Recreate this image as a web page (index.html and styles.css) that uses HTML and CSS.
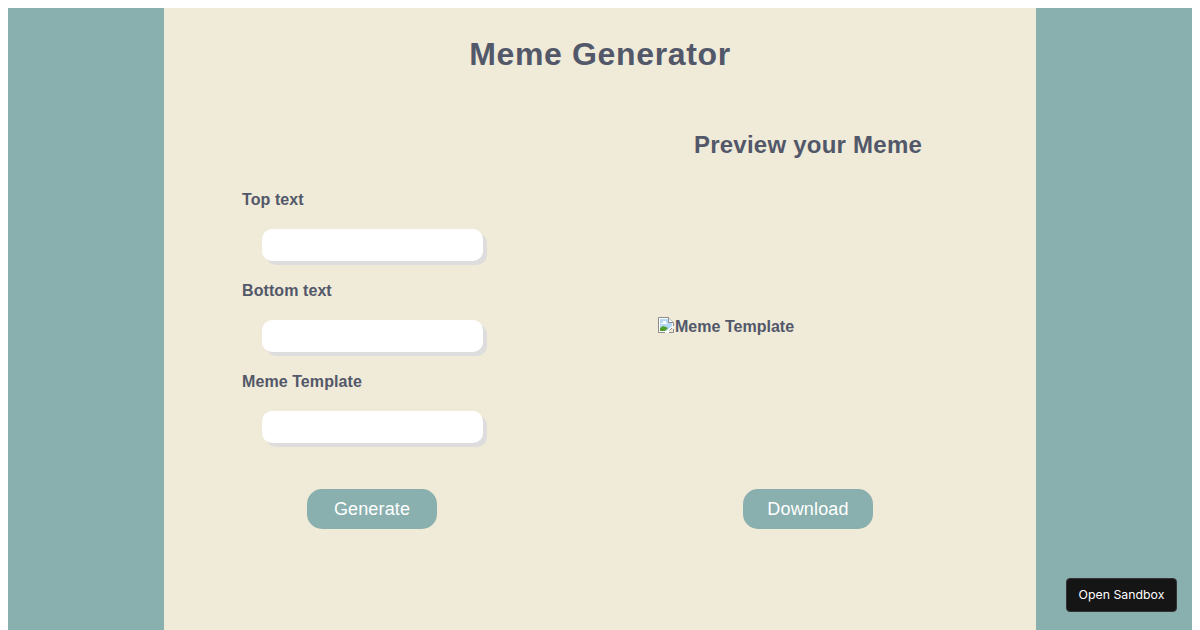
FILE: index.html
```html
<!DOCTYPE html>
<html lang="en">
<head>
<meta charset="utf-8">
<title>Meme Generator</title>
<link rel="stylesheet" href="styles.css">
</head>
<body>
<div class="page">
  <main class="panel">
    <h1 class="title">Meme Generator</h1>
    <div class="columns">
      <form class="form-col">
        <div class="fields">
          <label class="field-label">Top text</label>
          <input class="field-input" type="text">
          <label class="field-label">Bottom text</label>
          <input class="field-input" type="text">
          <label class="field-label">Meme Template</label>
          <input class="field-input" type="text">
        </div>
        <button class="action" type="button">Generate</button>
      </form>
      <section class="preview-col">
        <h2 class="subtitle">Preview your Meme</h2>
        <div class="preview">
          <svg class="broken" width="16" height="16" viewBox="0 0 16 16" aria-hidden="true">
            <path d="M0.5 15.5V0.5H10.5L15.5 5.5V15.5Z" fill="#fff"/>
            <path d="M2 2H10V6H14V9L8 14H2Z" fill="#b5d8f5"/>
            <path d="M3 6h2V4h3v2h1v1H3z" fill="#fff"/>
            <path d="M2 14V11L5 9L8 10L10 11L7 14Z" fill="#4f9e28"/>
            <path d="M0.5 15.5V0.5H10.5L15.5 5.5V9" fill="none" stroke="#8c8c8c"/>
            <path d="M0.5 15.5H7" fill="none" stroke="#8c8c8c"/>
            <path d="M10.5 0.5V5.5H15.5" fill="#f2f2f2" stroke="#8c8c8c"/>
            <path d="M15.5 10L10 15.5H15.5Z" fill="#efead8"/>
            <path d="M11 15.5H15.5V12M11.5 13.5L14 11" fill="none" stroke="#8c8c8c"/>
          </svg><span class="alt">Meme Template</span>
        </div>
        <button class="action" type="button">Download</button>
      </section>
    </div>
  </main>
</div>
<a class="sandbox" href="#">Open Sandbox</a>
</body>
</html>
```

FILE: styles.css
```css
* { box-sizing: border-box; }
html, body { height: 100%; }
body {
  margin: 0;
  padding: 8px 8px 0;
  background: #fff;
  overflow: hidden;
  font-family: "Liberation Sans", Arial, sans-serif;
  color: #525869;
}
.page {
  height: 622px;
  background: #89afae;
  display: flex;
  justify-content: center;
}
.panel {
  width: 872px;
  background: #f0ead8;
  padding: 0 78px;
}
.title {
  margin: 0;
  padding-top: 28px;
  height: 109px;
  font-size: 32px;
  line-height: 37px;
  font-weight: 700;
  letter-spacing: 0.64px;
  text-align: center;
}
.columns {
  display: grid;
  grid-template-columns: 260px 300px;
  justify-content: space-between;
}
.form-col, .preview-col {
  display: flex;
  flex-direction: column;
  align-items: center;
}
.fields {
  width: 100%;
  height: 372px;
  padding-top: 74px;
}
.field-label {
  display: block;
  font-size: 16px;
  line-height: 18px;
  height: 18px;
  font-weight: 700;
  letter-spacing: 0.08px;
}
.field-input {
  display: block;
  width: 221px;
  height: 32px;
  margin: 20px 0 21px 20px;
  padding: 0;
  border: 0;
  border-radius: 10px;
  background: #fff;
  box-shadow: 4px 4px 0 #ddd;
  outline: 0;
}
.action {
  width: 130px;
  height: 40px;
  padding: 0;
  border: 0;
  border-radius: 15px;
  background: #89afae;
  color: #fff;
  font-family: "Liberation Sans", Arial, sans-serif;
  font-size: 18px;
  letter-spacing: 0.15px;
}
.subtitle {
  margin: 0;
  width: 100%;
  padding-top: 14px;
  height: 164px;
  font-size: 24px;
  line-height: 28px;
  font-weight: 700;
  letter-spacing: 0.24px;
  text-align: center;
}
.preview {
  width: 100%;
  height: 208px;
  padding-top: 36px;
  display: flex;
  align-items: flex-start;
  font-size: 16px;
  line-height: 18px;
  font-weight: 700;
  letter-spacing: 0.02px;
}
.broken { flex: none; }
.alt { display: block; margin: 1px 0 0 1px; }
.sandbox {
  position: fixed;
  right: 23px;
  bottom: 18px;
  width: 111px;
  height: 34px;
  display: flex;
  align-items: center;
  justify-content: center;
  padding-bottom: 2px;
  background: #151515;
  border: 1px solid #333;
  border-radius: 4px;
  color: #fff;
  font-family: Inter, sans-serif;
  font-size: 12.3px;
  text-decoration: none;
}
```
